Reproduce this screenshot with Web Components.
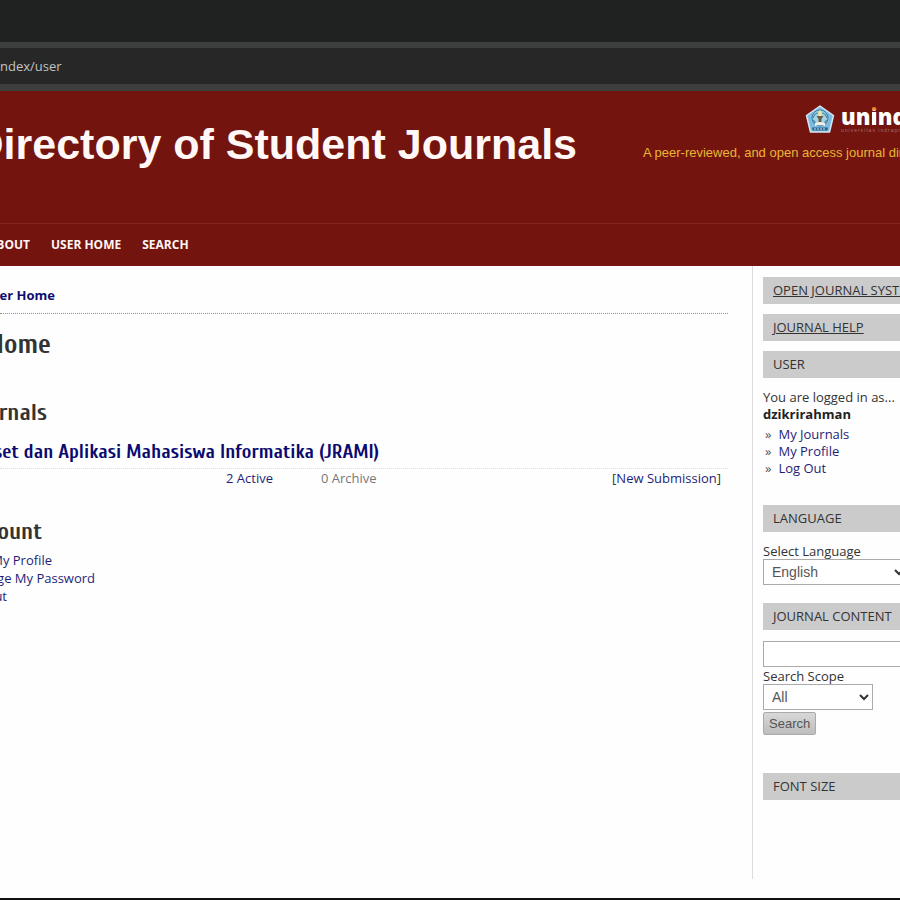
<!DOCTYPE html>
<html lang="en">
<head>
<meta charset="utf-8">
<title>User Home</title>
<style>
body{margin:0;background:#fefefe;font-family:"Open Sans","Noto Sans",sans-serif;font-size:13px;color:#333;overflow:hidden}
</style>
</head>
<body>
<journal-app></journal-app>
<script>
const define=(name,html)=>customElements.define(name,class extends HTMLElement{
  constructor(){super();this.attachShadow({mode:'open'}).innerHTML=html;}
});

define('browser-bar',`<style>
:host{display:block;background:#202221}
.tabs{height:42px}
.address{height:36px;border-top:6px solid #3d3e3e;border-bottom:7px solid #3d3e3e;background:#272727;color:#c3c3c3;display:flex;align-items:center}
</style><div class="tabs"></div><div class="address"><slot></slot></div>`);

define('uni-logo',`<style>
:host{display:flex;gap:6px;align-items:center;color:#fff}
svg{display:block;flex:none}
.word{font:800 22px/24px "Open Sans",sans-serif;white-space:nowrap}
.word span{background:linear-gradient(#f08a24 9px,#fff 9px);background-clip:text;-webkit-background-clip:text;color:transparent}
.name{display:flex;flex-direction:column}
small{font:5px/5px "Liberation Sans",sans-serif;letter-spacing:1px;color:#b9685f;white-space:nowrap}
</style>
<svg width="30" height="28" viewBox="0 0 30 28" aria-hidden="true">
<path d="M15 1 28.5 10.5 24.5 27H5.500L1.500 10.500Z" fill="#7dbbe0" stroke="#d5e7ef" stroke-width="1.500" stroke-linejoin="round"/>
<circle cx="15" cy="13" r="8" fill="#a4d4e8" stroke="#347cab" stroke-width="1"/>
<path d="M8 13q2-5 5-5M22 13q-2-5-5-5M8.500 15q2 4 5 4M21.500 15q-2 4-5 4" fill="none" stroke="#4c86a4" stroke-width="1.200"/>
<path d="M15 5q3 3 1 6h-2q-2-3 1-6Z" fill="#f3e5a3"/>
<path d="M11.500 11h7l-2 3v5h-3v-5Z" fill="#6a5c48"/>
<path d="M10 18q5-2 10 0v3q-5-2-10 0Z" fill="#f2efe4"/>
<path d="M7 22.500h16l-.7 3H7.700Z" fill="#2a648e"/>
<path d="M9 24h2m1 0h2m1 0h2m1 0h2" stroke="#d5e7ef" stroke-width="1"/>
</svg>
<div class="name"><div class="word">un<span>i</span>ndra</div><small>universitas indraprasta</small></div>`);

define('site-banner',`<style>
:host{display:grid;grid-template-columns:577px 1fr;height:132px;background:#73140e;border-bottom:1px solid #842722;overflow:hidden;white-space:nowrap}
h1{margin:0;padding-top:26px;display:flex;justify-content:flex-end;overflow:hidden;color:#fff8f6;font:700 43px/54px "Liberation Sans",sans-serif}
.side{padding:13px 0 0 66px;overflow:hidden}
uni-logo{padding-left:162px}
p{margin:12px 0 0;font:13px/16px "Liberation Sans",sans-serif;color:#e9b634}
</style><h1>Directory of Student Journals</h1>
<div class="side"><uni-logo></uni-logo><p>A peer-reviewed, and open access journal directory</p></div>`);

define('site-nav',`<style>
:host{display:block;background:#73140e}
nav{display:flex;gap:21px;height:42px;align-items:center}
a{color:#fff6f4;text-decoration:none;font-weight:700;font-size:12px;line-height:18px;white-space:nowrap}
.first{width:30px;display:flex;justify-content:flex-end;overflow:hidden}
</style><nav><a class="first" href="#">ABOUT</a><a href="#">USER HOME</a><a href="#">SEARCH</a></nav>`);

define('edge-line',`<style>
:host{display:flex;justify-content:flex-end;overflow:hidden;white-space:nowrap}
</style><slot></slot>`);

define('user-home',`<style>
:host{display:block;padding:18px 24px 0 0;line-height:22px}
a{color:#1f1f78;text-decoration:none}
h2,h3,h4{margin:0;font-family:Cuprum,"Open Sans Condensed","Roboto Condensed",sans-serif;font-weight:700;color:#333}
h2{font-size:28px;line-height:36px;margin-top:12px}
h3{font-size:24px;line-height:30px}
h4{font-size:20px;line-height:26px}
h4 a{color:#0a0a70}
.crumb{padding-bottom:7px;border-bottom:1px dotted #8f9a62}
.crumb a{font-weight:700;color:#0d0d72}
.w47{width:47px}.w51{width:51px}.w55{width:55px}.w379{width:379px}.w42{width:42px}.w95{width:95px}.w7{width:7px}.w52{width:52px}
.journals{margin-top:36px}
.title{margin-top:11px;padding-bottom:3px;border-bottom:1px dotted #ddd}
.row{display:grid;grid-template-columns:226px 95px 1fr auto;padding-right:7px;white-space:nowrap;line-height:18px}
.row a{grid-column:2}
.row .new{grid-column:4}
.muted{color:#777}
.account{margin-top:30px}
ul{list-style:none;margin:4px 0 0;padding:0;line-height:18px}
</style>
<div class="crumb"><edge-line class="w55"><a href="#">User Home</a></edge-line></div>
<h2><edge-line class="w51">Home</edge-line></h2>
<h3 class="journals"><edge-line class="w47">Journals</edge-line></h3>
<div class="title"><h4><edge-line class="w379"><a href="#">set dan Aplikasi Mahasiswa Informatika (JRAMI)</a></edge-line></h4></div>
<div class="row"><a href="#">2 Active</a><span class="muted">0 Archive</span><span class="new">[<a href="#">New Submission</a>]</span></div>
<h3 class="account"><edge-line class="w42">ount</edge-line></h3>
<ul><li><edge-line class="w52"><a href="#">My Profile</a></edge-line></li>
<li><edge-line class="w95"><a href="#">ge My Password</a></edge-line></li>
<li><edge-line class="w7"><a href="#">Out</a></edge-line></li></ul>`);

define('side-block',`<style>
:host{display:block;margin-bottom:10px}
h5{margin:0;background:#cbcbcb;padding-left:10px;font-weight:400;font-size:13px;line-height:27px;color:#333;white-space:nowrap;overflow:hidden}
.body{padding-top:11px}
:host([bare]) .body{display:none}
</style><h5><slot name="title"></slot></h5><div class="body"><slot></slot></div>`);

define('side-bar',`<style>
:host{display:block;border-left:1px solid #dcdcdc;margin-bottom:19px;padding:11px 0 0 10px;line-height:17px;overflow:hidden}
a{color:#1f1f78;text-decoration:none}
a[slot]{color:#333;text-decoration:underline}
strong{display:block;color:#222}
ul{list-style:none;margin:3px 0 28px;padding:0 0 0 2px}
li{display:flex;gap:7px}
li::before{content:"»";color:#555}
label{display:block;line-height:16px;white-space:nowrap}
select,input{display:block;box-sizing:border-box;height:26px;border:1px solid #aaa;background:#fff;font:14px "Liberation Sans",sans-serif;color:#555;border-radius:0;margin:0}
select{appearance:none;padding:0 8px}
.pick{display:grid;width:110px}
.pick.wide{width:145px}
.pick select,.pick svg{grid-area:1/1}
.pick svg{justify-self:end;align-self:center;margin-right:4px;pointer-events:none}
input{width:180px;margin-bottom:1px}
button{display:block;margin:2px 0 38px;height:23px;padding:0 5px;border:1px solid #aaa;border-radius:2px;background:linear-gradient(#d8d8d8,#bdbdbd);font:13px "Liberation Sans",sans-serif;color:#555}
.lang{margin-bottom:18px}
</style>
<side-block bare><a slot="title" href="#">OPEN JOURNAL SYSTEMS</a></side-block>
<side-block bare><a slot="title" href="#">JOURNAL HELP</a></side-block>
<side-block><span slot="title">USER</span>You are logged in as...<strong>dzikrirahman</strong>
<ul><li><a href="#">My Journals</a></li><li><a href="#">My Profile</a></li><li><a href="#">Log Out</a></li></ul></side-block>
<side-block><span slot="title">LANGUAGE</span><div class="lang"><label for="lang">Select Language</label>
<div class="pick wide"><select id="lang"><option>English</option></select><svg width="10" height="7" viewBox="0 0 10 7"><path d="m1 1 4 4 4-4" fill="none" stroke="#333" stroke-width="2"/></svg></div></div></side-block>
<side-block><span slot="title">JOURNAL CONTENT</span><input type="text" aria-label="Search journal content"><label for="scope">Search Scope</label>
<div class="pick"><select id="scope"><option>All</option></select><svg width="10" height="7" viewBox="0 0 10 7"><path d="m1 1 4 4 4-4" fill="none" stroke="#333" stroke-width="2"/></svg></div>
<button type="button">Search</button></side-block>
<side-block bare><span slot="title">FONT SIZE</span></side-block>`);

define('journal-app',`<style>
:host{display:flex;flex-direction:column;min-height:100vh;box-sizing:border-box;border-bottom:2px solid #111}
main{flex:1;display:grid;grid-template-columns:minmax(0,1fr) 148px}
</style><browser-bar>ndex/user</browser-bar><site-banner></site-banner><site-nav></site-nav>
<main><user-home></user-home><side-bar></side-bar></main>`);
</script>
</body>
</html>
